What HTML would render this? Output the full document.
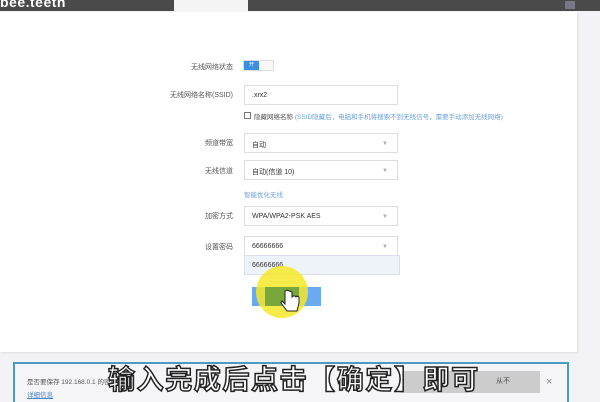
<!DOCTYPE html>
<html><head><meta charset="utf-8"><style>
*{margin:0;padding:0;box-sizing:border-box}
body{width:600px;height:400px;overflow:hidden;background:#f3f3f7;font-family:"Liberation Sans","Noto Sans CJK SC",sans-serif;position:relative}
.a{position:absolute}
.top{left:0;top:0;width:600px;height:11px;background:#4a4a4a}
.tab{left:174px;top:0;width:74px;height:12px;background:#f4f4f4}
.card{left:0;top:12px;width:577px;height:340px;background:#fff;box-shadow:1px 1px 2px #ddd}
.lbl{font-size:7px;color:#555;text-align:right;width:100px;left:133px}
.inp{left:244px;width:154px;height:20px;border:1px solid #ddd;background:#fff;font-size:7px;color:#333;padding:6px 0 0 7px}
.arr{position:absolute;right:9px;top:7px;font-size:6px;color:#aaa}
</style></head><body>
<div class="a top"></div>
<div class="a" style="left:0;top:-5px;color:#fff;font-size:14px;font-weight:bold;line-height:14px;letter-spacing:0.5px">bee.teeth</div>
<div class="a tab"></div>
<div class="a" style="left:565px;top:1px;width:10px;height:8px;background:#778"></div>
<div class="a card"></div>

<div class="a lbl" style="top:62px">无线网络状态</div>
<div class="a" style="left:243px;top:60px;width:31px;height:11px;border:1px solid #ddd;background:#f8f8f8"></div>
<div class="a" style="left:244px;top:61px;width:15px;height:9px;background:#3b8fe0;color:#fff;font-size:5px;text-align:center;line-height:9px">开</div>

<div class="a lbl" style="top:90px">无线网络名称(SSID)</div>
<div class="a inp" style="top:85px">.xrx2</div>

<div class="a" style="left:244px;top:112px;width:7px;height:7px;border:1px solid #777"></div>
<div class="a" style="left:254px;top:111px;font-size:6.5px;color:#555;white-space:nowrap">隐藏网络名称 <span style="color:#6aa2dc">(SSID隐藏后，电脑和手机将搜索不到无线信号，需要手动添加无线网络)</span></div>

<div class="a lbl" style="top:138px">频道带宽</div>
<div class="a inp" style="top:133px">自动<span class="arr">▼</span></div>

<div class="a lbl" style="top:166px">无线信道</div>
<div class="a inp" style="top:160px">自动(信道 10)<span class="arr">▼</span></div>

<div class="a" style="left:244px;top:189px;font-size:6.5px;color:#6aa2dc">智能优化无线</div>

<div class="a lbl" style="top:211px">加密方式</div>
<div class="a inp" style="top:206px">WPA/WPA2-PSK AES<span class="arr">▼</span></div>

<div class="a lbl" style="top:242px">设置密码</div>
<div class="a inp" style="top:236px">66666666<span class="arr">▼</span></div>
<div class="a" style="left:244px;top:255px;width:156px;height:20px;background:#eef3fa;border:1px solid #dde;font-size:7px;color:#333;padding:6px 0 0 7px">66666666</div>

<div class="a" style="left:252px;top:287px;width:69px;height:19px;background:#6aaaf2"></div>
<div class="a" style="left:256px;top:266px;width:52px;height:52px;border-radius:50%;background:rgba(245,232,40,.85)"></div>
<div class="a" style="left:265px;top:287px;width:34px;height:19px;background:#7aa73c"></div>
<svg class="a" style="left:280px;top:288px" width="22" height="26" viewBox="0 0 22 26"><path d="M5 3v13l-3-3-1 2 6 8h10l2-8v-6l-2-1-1 1-1-1-2 0-1 1V4L7 2z" fill="#fff" stroke="#222" stroke-width="1"/></svg>

<div class="a" style="left:13px;top:362px;width:556px;height:40px;background:#f5f5f7;border:2px solid #4a9bc4;border-bottom:none"></div>
<div class="a" style="left:27px;top:376px;font-size:6.5px;color:#555">是否要保存 192.168.0.1 的密码?</div>
<div class="a" style="left:27px;top:389px;font-size:6.5px;color:#4a86c8;text-decoration:underline">详细信息</div>
<div class="a" style="left:400px;top:371px;width:140px;height:22px;background:#ccc;font-size:7px;color:#444;line-height:22px;padding-left:96px">从不</div>
<div class="a" style="left:546px;top:376px;font-size:11px;color:#888">×</div>
<div class="a" style="left:108px;top:361px;font-size:27px;color:#fff;font-weight:bold;letter-spacing:1.6px;white-space:nowrap;-webkit-text-stroke:1.5px #222;font-family:'Noto Sans CJK SC',sans-serif;line-height:34px">输入完成后点击【确定】即可</div>
</body></html>
